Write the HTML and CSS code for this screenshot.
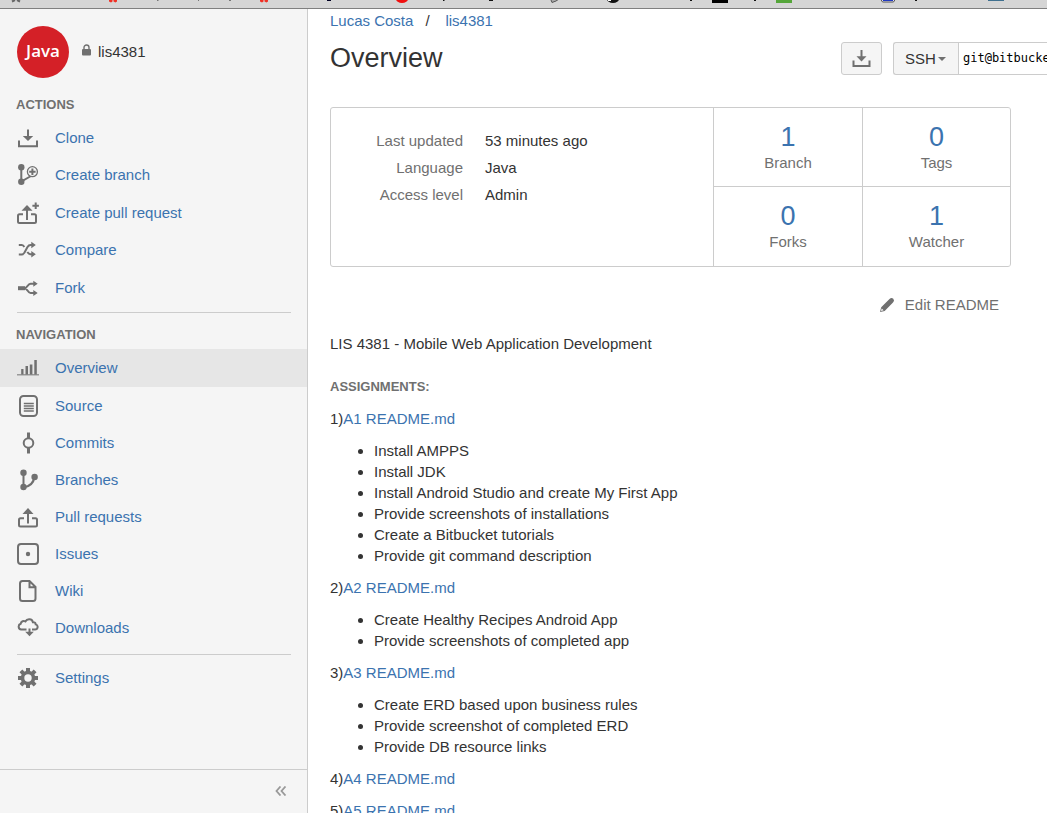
FILE: index.html
```html
<!DOCTYPE html>
<html lang="en">
<head>
<meta charset="utf-8">
<title>lis4381 — Overview</title>
<link rel="stylesheet" href="styles.css">
</head>
<body>
<div class="toolbar" aria-hidden="true">
  <svg width="1047" height="8" viewBox="0 0 1047 8">
    <path d="M12 1.500l3-1.500M20 1.500l-3-1.500" stroke="#666" stroke-width="2"/>
    <path d="M109 0h3.500v1.500l-1.500 1-2-1zM113.500 0h3.500v1.500l-1.500 1-2-1zM260 0h3.500v1.500l-1.500 1-2-1zM264.500 0h3.500v1.500l-1.500 1-2-1z" fill="#f03024"/>
    <path d="M157 0h1.500v1h-1.500zM198 0h1v1h-1zM229 0h2v1h-2z" fill="#777"/>
    <path d="M327 0h4v1h-4z" fill="#002"/>
    <ellipse cx="402" cy="-1" rx="6" ry="4" fill="#f01010"/>
    <path d="M443 0h1.500v1h-1.500zM489 0h4v1h-4zM690 0h2v1h-2zM754 0h2v1h-2zM915 0h2v1h-2z" fill="#111"/>
    <path d="M551 0l1 2.500 4-1.500 3-2" fill="#aaa" stroke="#555"/>
    <ellipse cx="613" cy="-1" rx="6" ry="4" fill="#111"/>
    <path d="M608 0h3v1h-3z" fill="#fff"/>
    <path d="M712 0h16v3h-16z" fill="#000"/>
    <path d="M776 0h16v3h-16z" fill="#55a63a"/>
    <path d="M880.500-1l2 3h11l2-3" fill="#dde" stroke="#555"/>
    <path d="M883 0h10v1h-10z" fill="#2038c0"/>
    <path d="M988 0h16v1h-16z" fill="#40708f"/>
  </svg>
</div>
<div class="page">
  <aside class="sidebar">
    <div class="repo">
      <span class="avatar">Java</span>
      <svg class="lock" viewBox="0 0 9 12"><path d="M2 5.500V3.500a2.500 2.500 0 0 1 5 0v2" fill="none" stroke="#707070" stroke-width="1.400"/><rect y="5" width="9" height="6.500" rx="1" fill="#707070"/></svg>
      <a class="repo-name" href="#">lis4381</a>
    </div>

    <h2 class="side-heading">Actions</h2>
    <ul class="side-list actions">
      <li><a class="side-link" href="#"><svg class="icon" viewBox="0 0 22 22"><path class="line" d="M2 13.500V19.200H20V13.500M11 2.500V10"/><path class="solid" d="M5.800 9h10.400L11 14z"/></svg>Clone</a></li>
      <li><a class="side-link" href="#"><svg class="icon" viewBox="0 0 22 22"><path class="line" d="M4.300 3v14.500L14 12"/><circle class="solid" cx="4.300" cy="3.200" r="3.200"/><circle class="solid" cx="4.300" cy="17.800" r="3.200"/><circle class="thin cut" cx="15.400" cy="7.700" r="5"/><path class="line" d="M15.400 4.500v6.400M12.200 7.700h6.400"/></svg>Create branch</a></li>
      <li><a class="side-link" href="#"><svg class="icon" viewBox="0 0 22 22"><path class="line" d="M6 12.200H2.500q-1.500 0-1.500 1.500V19.500q0 1.500 1.500 1.500h15q1.500 0 1.500-1.500v-5.800q0-1.500-1.500-1.500H14M10 8v10M18.700.500v6.500M15.400 3.700h6.500"/><path class="solid" d="M4.500 8.800h11L10 3z"/></svg>Create pull request</a></li>
      <li><a class="side-link" href="#"><svg class="icon" viewBox="0 0 22 22"><path class="line" d="M1.800 6h3q1.500 0 2.500 2M1.800 15.500h3q1.500 0 2.700-2l3-5.500q1.200-2 3-2h2M10.300 13q1.500 2.200 3.200 2.200h2"/><path class="solid" d="M14.300 2.700v6.600l4.500-3.300zM14.300 12v6.600l4.500-3.300z"/></svg>Compare</a></li>
      <li><a class="side-link" href="#"><svg class="icon" viewBox="0 0 22 22"><path class="solid" d="M1 9.200h7v4H1z"/><path class="line" d="M17 6.700h-3.500c-3 0-3 4.500-6 4.500 3 0 3 4.700 6 4.700H17"/><path class="solid" d="M16.300 3.700v6l4.400-3zM16.300 12.900v6l4.400-3z"/></svg>Fork</a></li>
    </ul>

    <hr class="rule">

    <h2 class="side-heading">Navigation</h2>
    <ul class="side-list">
      <li><a class="side-link current" href="#"><svg class="icon" viewBox="0 0 22 22"><path d="M0 17h22v1.500H0z" fill="#999"/><path class="solid" d="M4.200 12h2.300v5.500H4.200zM8.500 9h2.500v8.500H8.500zM12.800 7.500h2.600v10h-2.600zM17.300 3h2.500v14.500h-2.500z"/></svg>Overview</a></li>
      <li><a class="side-link" href="#"><svg class="icon" viewBox="0 0 22 22"><rect class="line" x="3" y="1" width="17" height="20" rx="3.500"/><path class="thin" d="M6.800 8.500h10M6.800 11h10M6.800 13.500h10M6.800 16h10"/></svg>Source</a></li>
      <li><a class="side-link" href="#"><svg class="icon" viewBox="0 0 22 22"><circle class="line" cx="11.500" cy="11" r="4.800"/><path class="solid" d="M10 .500h3V6h-3zM10 16h3v5.500h-3z"/></svg>Commits</a></li>
      <li><a class="side-link" href="#"><svg class="icon" viewBox="0 0 22 22"><path class="line" d="M6.500 4v14.500c6-1 10-4 11-10.500"/><circle class="solid" cx="6.500" cy="3.700" r="3.200"/><circle class="solid" cx="6.500" cy="18" r="3.200"/><circle class="solid" cx="17.600" cy="8" r="3.200"/></svg>Branches</a></li>
      <li><a class="side-link" href="#"><svg class="icon" viewBox="0 0 22 22"><path class="line" d="M7 12.200H3.500q-1.500 0-1.500 1.500V19q0 1.500 1.500 1.500h15q1.500 0 1.500-1.500v-5.300q0-1.500-1.500-1.500H15M11 7.500v10"/><path class="solid" d="M5.500 8h11L11 2z"/></svg>Pull requests</a></li>
      <li><a class="side-link" href="#"><svg class="icon" viewBox="0 0 22 22"><rect class="line" x="1" y="1" width="20" height="20" rx="3"/><circle class="solid" cx="11" cy="11" r="2.200"/></svg>Issues</a></li>
      <li><a class="side-link" href="#"><svg class="icon" viewBox="0 0 22 22"><path class="line" d="M13 1H5.500Q3 1 3 3.500v15Q3 21 5.500 21h10.500q2.500 0 2.500-2.500V7L12.500 1v6.300h6"/></svg>Wiki</a></li>
      <li><a class="side-link" href="#"><svg class="icon" viewBox="0 0 22 22"><path class="line" d="M9.500 12.500H4.200a3 3 0 0 1-.500-5.800c.400-2.500 3-3.300 4.700-2.300 1.700-3 6.800-2.700 7.500.800 2-.200 2.800.800 2.800 2.200 3 .900 2.300 5.100-.700 5.100H15M12.500 11.500v5"/><path class="solid" d="M8.200 14.800h8.600L12.500 19.200z"/></svg>Downloads</a></li>
    </ul>

    <hr class="rule">

    <ul class="side-list settings">
      <li><a class="side-link" href="#"><svg class="icon" viewBox="0 0 22 22"><path d="M11 1v20M1 11h20M3.900 3.900l14.200 14.200M18.100 3.900L3.900 18.100" stroke="#707070" stroke-width="4"/><circle class="solid" cx="11" cy="11" r="7.300"/><circle cx="11" cy="11" r="3.700" fill="#f5f5f5"/></svg>Settings</a></li>
    </ul>

    <div class="side-footer">
      <button class="collapse" type="button" aria-label="Collapse sidebar"><svg width="12" height="10" viewBox="0 0 12 10"><path d="M5.500.500L1.500 5l4 4.500M10.500.500L6.500 5l4 4.500" fill="none" stroke="#999" stroke-width="1.800"/></svg></button>
    </div>
  </aside>

  <main class="content">
    <nav class="crumbs"><a href="#">Lucas Costa</a><span>/</span><a href="#">lis4381</a></nav>
    <header class="header">
      <h1 class="title">Overview</h1>
      <button class="clone" type="button" aria-label="Clone"><svg width="20" height="20" viewBox="0 0 20 20"><path class="line" d="M1.500 11.500V17H17.500V11.500M9.500 1V8"/><path class="solid" d="M4.500 7.200h10L9.500 12.500z"/></svg></button>
      <div class="url-field">
        <div class="protocol-box">
          <select class="protocol" aria-label="Protocol"><option>SSH</option><option>HTTPS</option></select>
          <svg class="caret" width="8" height="4" viewBox="0 0 8 4"><path class="solid" d="M0 0h8L4 4z"/></svg>
        </div>
        <input class="url" type="text" readonly aria-label="Clone URL" value="git@bitbucket.org">
      </div>
    </header>

    <section class="summary">
      <dl class="facts">
        <dt>Last updated</dt><dd>53 minutes ago</dd>
        <dt>Language</dt><dd>Java</dd>
        <dt>Access level</dt><dd>Admin</dd>
      </dl>
      <div class="stats">
        <a class="stat" href="#"><span class="count">1</span>Branch</a>
        <a class="stat" href="#"><span class="count">0</span>Tags</a>
        <a class="stat" href="#"><span class="count">0</span>Forks</a>
        <a class="stat" href="#"><span class="count">1</span>Watcher</a>
      </div>
    </section>

    <div class="edit-row">
      <a class="edit" href="#"><svg width="16" height="16" viewBox="0 0 16 16"><path class="solid" d="M1 15l1.200-4.700L10.500 2q2-2 3.800-.200 1.700 1.900-.300 3.800L5.700 14z"/><path d="M2 14l.700-2.600 1.900 1.900z" fill="#fff"/></svg>Edit README</a>
    </div>

    <article class="readme">
      <p>LIS 4381 - Mobile Web Application Development</p>
      <h2 class="readme-heading">Assignments:</h2>
      <p>1)<a href="#">A1 README.md</a></p>
      <ul>
        <li>Install AMPPS</li>
        <li>Install JDK</li>
        <li>Install Android Studio and create My First App</li>
        <li>Provide screenshots of installations</li>
        <li>Create a Bitbucket tutorials</li>
        <li>Provide git command description</li>
      </ul>
      <p>2)<a href="#">A2 README.md</a></p>
      <ul>
        <li>Create Healthy Recipes Android App</li>
        <li>Provide screenshots of completed app</li>
      </ul>
      <p>3)<a href="#">A3 README.md</a></p>
      <ul>
        <li>Create ERD based upon business rules</li>
        <li>Provide screenshot of completed ERD</li>
        <li>Provide DB resource links</li>
      </ul>
      <p>4)<a href="#">A4 README.md</a></p>
      <p>5)<a href="#">A5 README.md</a></p>
    </article>
  </main>
</div>
</body>
</html>
```
FILE: styles.css
```css
* { box-sizing: border-box; }

body {
  display: flex;
  flex-direction: column;
  height: 100vh;
  margin: 0;
  overflow: hidden;
  background: #fff;
  color: #333;
  font: 15px/21px "Liberation Sans", Arial, sans-serif;
}

h1, h2, p, ul, dl, dd { margin: 0; padding: 0; }
a { color: #3b73af; text-decoration: none; }
svg { display: block; flex: none; }
button, select, input { margin: 0; font: inherit; color: inherit; }

.line { fill: none; stroke: #707070; stroke-width: 2; }
.thin { fill: none; stroke: #707070; stroke-width: 1.3; }
.cut { fill: #f5f5f5; }
.solid { fill: #707070; }

.toolbar {
  flex: none;
  overflow: hidden;
  background: #d5d5d5;
  border-bottom: 1px solid #7f7f7f;
}

.page { display: flex; flex: 1; min-height: 0; }

/* Sidebar */
.sidebar {
  display: flex;
  flex: none;
  flex-direction: column;
  width: 308px;
  padding-top: 17px;
  background: #f5f5f5;
  border-right: 1px solid #ccc;
}
.repo { display: flex; align-items: center; padding: 0 17px; margin-bottom: 16px; }
.avatar {
  width: 52px;
  margin-right: 13px;
  border-radius: 50%;
  background: #d42027;
  color: #fff;
  font: 600 17px/50px "Open Sans", sans-serif;
  padding-bottom: 2px;
  text-align: center;
}
.lock { width: 9px; height: 12px; margin: 0 7px 4px 0; }
.repo-name { padding-bottom: 1px; color: #333; }
.side-heading, .readme-heading {
  color: #707070;
  font-size: 13px;
  line-height: 21px;
  text-transform: uppercase;
}
.side-heading { padding: 0 16px; margin-bottom: 4px; }
.side-list { list-style: none; }
.actions li:nth-child(even) { padding-bottom: 1px; }
.side-link { display: flex; align-items: center; gap: 16px; padding: 8px 17px; }
.side-link.current { padding: 8px 17px 9px; background: #e6e6e6; }
.icon { width: 22px; height: 22px; margin: -1px 0; }
.rule { width: auto; margin: 8px 16px 11px 17px; border: 0; border-top: 1px solid #ccc; }
.actions + .rule { margin-top: 6px; }
.settings { margin-top: -7px; }
.side-footer {
  display: flex;
  justify-content: flex-end;
  height: 44px;
  padding: 0 20px 2px;
  margin-top: auto;
  border-top: 1px solid #ccc;
}
.collapse { padding: 0; background: none; border: 0; }

/* Main column */
.content { flex: 1; min-width: 0; padding: 1px 36px 0 22px; }
.crumbs { display: flex; }
.crumbs span { width: 32px; padding-left: 12px; }
.header { display: flex; align-items: center; margin: 11px -36px 32px 0; }
.title { flex: 1; padding-bottom: 1px; font-size: 27px; font-weight: 400; line-height: 30px; }
.clone {
  display: flex;
  align-items: center;
  justify-content: center;
  width: 41px;
  height: 33px;
  margin-right: 11px;
  padding: 0;
  background: #f5f5f5;
  border: 1px solid #ccc;
  border-radius: 3px;
}
.url-field { display: flex; height: 33px; }
.protocol-box { position: relative; width: 65px; }
.protocol {
  width: 100%;
  height: 33px;
  padding: 0 11px 1px;
  appearance: none;
  background: #f5f5f5;
  border: 1px solid #ccc;
  border-right: 0;
  border-radius: 3px 0 0 3px;
}
.caret { position: absolute; top: 15px; right: 12px; pointer-events: none; }
.url {
  width: 89px;
  padding: 0 0 0 4px;
  background: #fff;
  border: 1px solid #ccc;
  border-right: 0;
  border-radius: 0;
  color: #000;
  font: 12px/21px "DejaVu Sans Mono", monospace;
}

.summary { display: flex; border: 1px solid #ccc; border-radius: 3px; }
.facts {
  display: grid;
  flex: 1;
  grid-template-columns: 132px 1fr;
  align-content: start;
  gap: 6px 22px;
  padding-top: 22px;
}
.facts dt { color: #707070; text-align: right; }
.stats {
  display: grid;
  grid-template-columns: 148px 147px;
  gap: 1px;
  padding-left: 1px;
  background: #ccc;
  border-radius: 0 2px 2px 0;
  overflow: hidden;
}
.stat { padding: 14px 0 13px; background: #fff; color: #707070; text-align: center; }
.stat:nth-child(n + 3) { padding-bottom: 14px; }
.count { display: block; color: #3b73af; font-size: 27px; line-height: 30px; }

.edit-row { display: flex; justify-content: flex-end; margin: 27px 12px 18px; }
.edit { display: flex; align-items: center; gap: 10px; color: #707070; }

.readme > * + * { margin-top: 11px; }
.readme > .readme-heading { margin-top: 22px; }
.readme ul { padding-left: 44px; }
```
